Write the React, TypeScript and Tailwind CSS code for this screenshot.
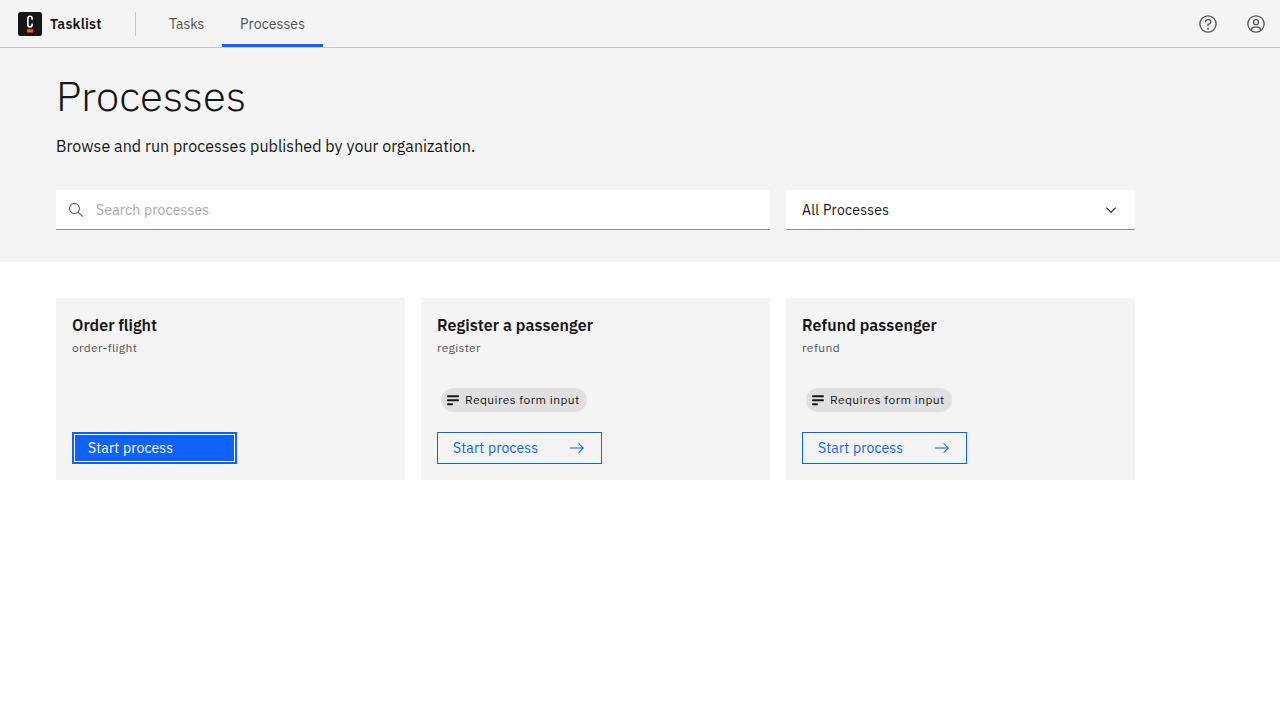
import type { ReactNode } from "react";

type Process = { name: string; id: string; form: boolean; active: boolean; titleSpacing: string; idSpacing: string };

const processes: Process[] = [
  { name: "Order flight", id: "order-flight", form: false, active: true, titleSpacing: "tracking-[0px]", idSpacing: "tracking-[0.35px]" },
  { name: "Register a passenger", id: "register", form: true, active: false, titleSpacing: "tracking-[0.08px]", idSpacing: "tracking-[0.32px]" },
  { name: "Refund passenger", id: "refund", form: true, active: false, titleSpacing: "tracking-[0.08px]", idSpacing: "tracking-[0.48px]" },
];

function Icon({ size, box = 32, className = "", children }: { size: number; box?: number; className?: string; children: ReactNode }) {
  return (
    <svg width={size} height={size} viewBox={`0 0 ${box} ${box}`} fill="currentColor" className={`shrink-0 ${className}`} aria-hidden="true">
      {children}
    </svg>
  );
}

function Logo() {
  return (
    <svg width="24" height="24" viewBox="0 0 24 24" className="mt-px shrink-0" aria-hidden="true">
      <rect width="24" height="24" rx="2.5" fill="#161616" />
      <path d="M14.1 7.8V6.4a2.1 2.1 0 0 0-4.2 0v6.4a2.1 2.1 0 0 0 4.2 0v-1.4" fill="none" stroke="#fff" strokeWidth="1.6" />
      <rect x="9" y="17.3" width="6" height="3.2" fill="#fc5d0d" />
    </svg>
  );
}

function Header() {
  return (
    <header className="flex h-12 items-center border-b border-[#c6c6c6] bg-[#f4f4f4] pl-[18px]">
      <Logo />
      <span className="mt-0.5 ml-2 w-[85px] text-[14px] font-semibold tracking-[0.22px] text-[#161616]">Tasklist</span>
      <div className="mt-px h-6 w-px bg-[#c6c6c6]" />
      <nav className="ml-[15px] flex h-full text-[14px] text-[#525252]">
        <a className="flex w-[71px] items-center pl-[18px] pt-px">Tasks</a>
        <a className="flex w-[101px] items-center border-b-3 border-[#0f62fe] pl-[18px] pt-1 tracking-[0.13px]">Processes</a>
      </nav>
      <div className="ml-auto flex text-[#525252]">
        <button className="flex size-12 items-center justify-center" aria-label="Help">
          <Icon size={20}>
            <path d="M16 2A14 14 0 1 0 30 16 14 14 0 0 0 16 2Zm0 26A12 12 0 1 1 28 16 12 12 0 0 1 16 28Z" />
            <circle cx="16" cy="23.5" r="1.5" />
            <path d="M17 8H15.5A4.49 4.49 0 0 0 11 12.5V13H13v-.5A2.5 2.5 0 0 1 15.5 10H17a2.5 2.5 0 0 1 0 5H15v4.5h2V17a4.5 4.5 0 0 0 0-9Z" />
          </Icon>
        </button>
        <button className="flex size-12 items-center justify-center" aria-label="Account">
          <Icon size={20}>
            <path d="M16 8a5 5 0 1 0 5 5A5 5 0 0 0 16 8Zm0 8a3 3 0 1 1 3-3A3 3 0 0 1 16 16Z" />
            <path d="M16 2A14 14 0 1 0 30 16 14.016 14.016 0 0 0 16 2ZM10 26.3765V25a3.0033 3.0033 0 0 1 3-3h6a3.0033 3.0033 0 0 1 3 3v1.3765a11.8989 11.8989 0 0 1-12 0Zm13.9925-1.4507A5.0016 5.0016 0 0 0 19 20H13a5.0016 5.0016 0 0 0-4.9925 4.9258 12 12 0 1 1 15.985 0Z" />
          </Icon>
        </button>
      </div>
    </header>
  );
}

function ProcessCard({ name, id, form, active, titleSpacing, idSpacing }: Process) {
  return (
    <article className="flex h-[182px] flex-col items-start bg-[#f4f4f4] p-4">
      <h2 className={`text-[16px] leading-[22px] font-semibold text-[#161616] ${titleSpacing}`}>{name}</h2>
      <p className={`mt-1 text-[12px] leading-4 text-[#525252] ${idSpacing}`}>{id}</p>
      {form && (
        <div className="mt-8 ml-1 flex h-6 w-[146px] items-center rounded-full bg-[#e0e0e0] pl-1.5 text-[12px] tracking-[0.43px] text-[#161616]">
          <Icon size={12} box={12} className="mr-1.5">
            <rect y="1.2" width="12" height="2" rx="1" />
            <rect y="5.2" width="12" height="2" rx="1" />
            <rect y="9.2" width="6" height="2" rx="1" />
          </Icon>
          <span className="whitespace-nowrap">Requires form input</span>
        </div>
      )}
      {active ? (
        <button className="mt-auto flex h-8 w-[165px] items-center border-2 border-[#0f62fe] bg-[#0f62fe] pl-3.5 text-[14px] tracking-[0.16px] text-white inset-ring inset-ring-white">
          Start process
        </button>
      ) : (
        <button className="mt-auto flex h-8 w-[165px] items-center justify-between border border-[#0f62fe] pr-4 pl-[15px] text-[14px] tracking-[0.16px] text-[#0f62fe]">
          Start process
          <Icon size={16} box={16}>
            <path d="M9.3 3.7 13.1 7.5H1v1h12.1L9.3 12.3 10 13l5-5-5-5Z" />
          </Icon>
        </button>
      )}
    </article>
  );
}

export default function App() {
  return (
    <div className="h-[720px] overflow-hidden bg-white font-['IBM_Plex_Sans',Roboto,sans-serif] text-[#161616] [text-rendering:optimizeLegibility]">
      <Header />
      <section className="h-[214px] bg-[#f4f4f4] pl-14">
        <h1 className="pt-[23px] text-[42px] leading-[50px] font-light tracking-[0.15px]">Processes</h1>
        <p className="mt-[13px] text-[16px] leading-6 tracking-[0.05px]">Browse and run processes published by your organization.</p>
        <div className="mt-8 flex gap-4">
          <div className="flex h-10 w-[714px] items-center border-b border-[#8d8d8d] bg-white pl-3">
            <Icon size={16} box={16} className="mt-px text-[#525252]">
              <path d="M15 14.3 10.7 10c1.9-2.3 1.6-5.8-.7-7.7S4.2.7 2.3 3 .7 8.8 3 10.7c2 1.7 5 1.7 7 0l4.3 4.3.7-.7ZM2 6.5C2 4 4 2 6.5 2S11 4 11 6.5 9 11 6.5 11 2 9 2 6.5Z" />
            </Icon>
            <span className="mt-0.5 ml-3 text-[14px] tracking-[0.18px] text-[#a8a8a8]">Search processes</span>
          </div>
          <div className="flex h-10 w-[349px] items-center justify-between border-b border-[#8d8d8d] bg-white pr-4 pl-4 text-[14px] tracking-[0.28px]">
            <span className="mt-0.5">All Processes</span>
            <Icon size={16} box={16} className="mt-px">
              <path d="M8 11 3 6l.7-.7L8 9.6l4.3-4.3.7.7Z" />
            </Icon>
          </div>
        </div>
      </section>
      <main className="grid grid-cols-[349px_349px_349px] gap-4 pt-9 pl-14">
        {processes.map((p) => (
          <ProcessCard key={p.id} {...p} />
        ))}
      </main>
    </div>
  );
}
